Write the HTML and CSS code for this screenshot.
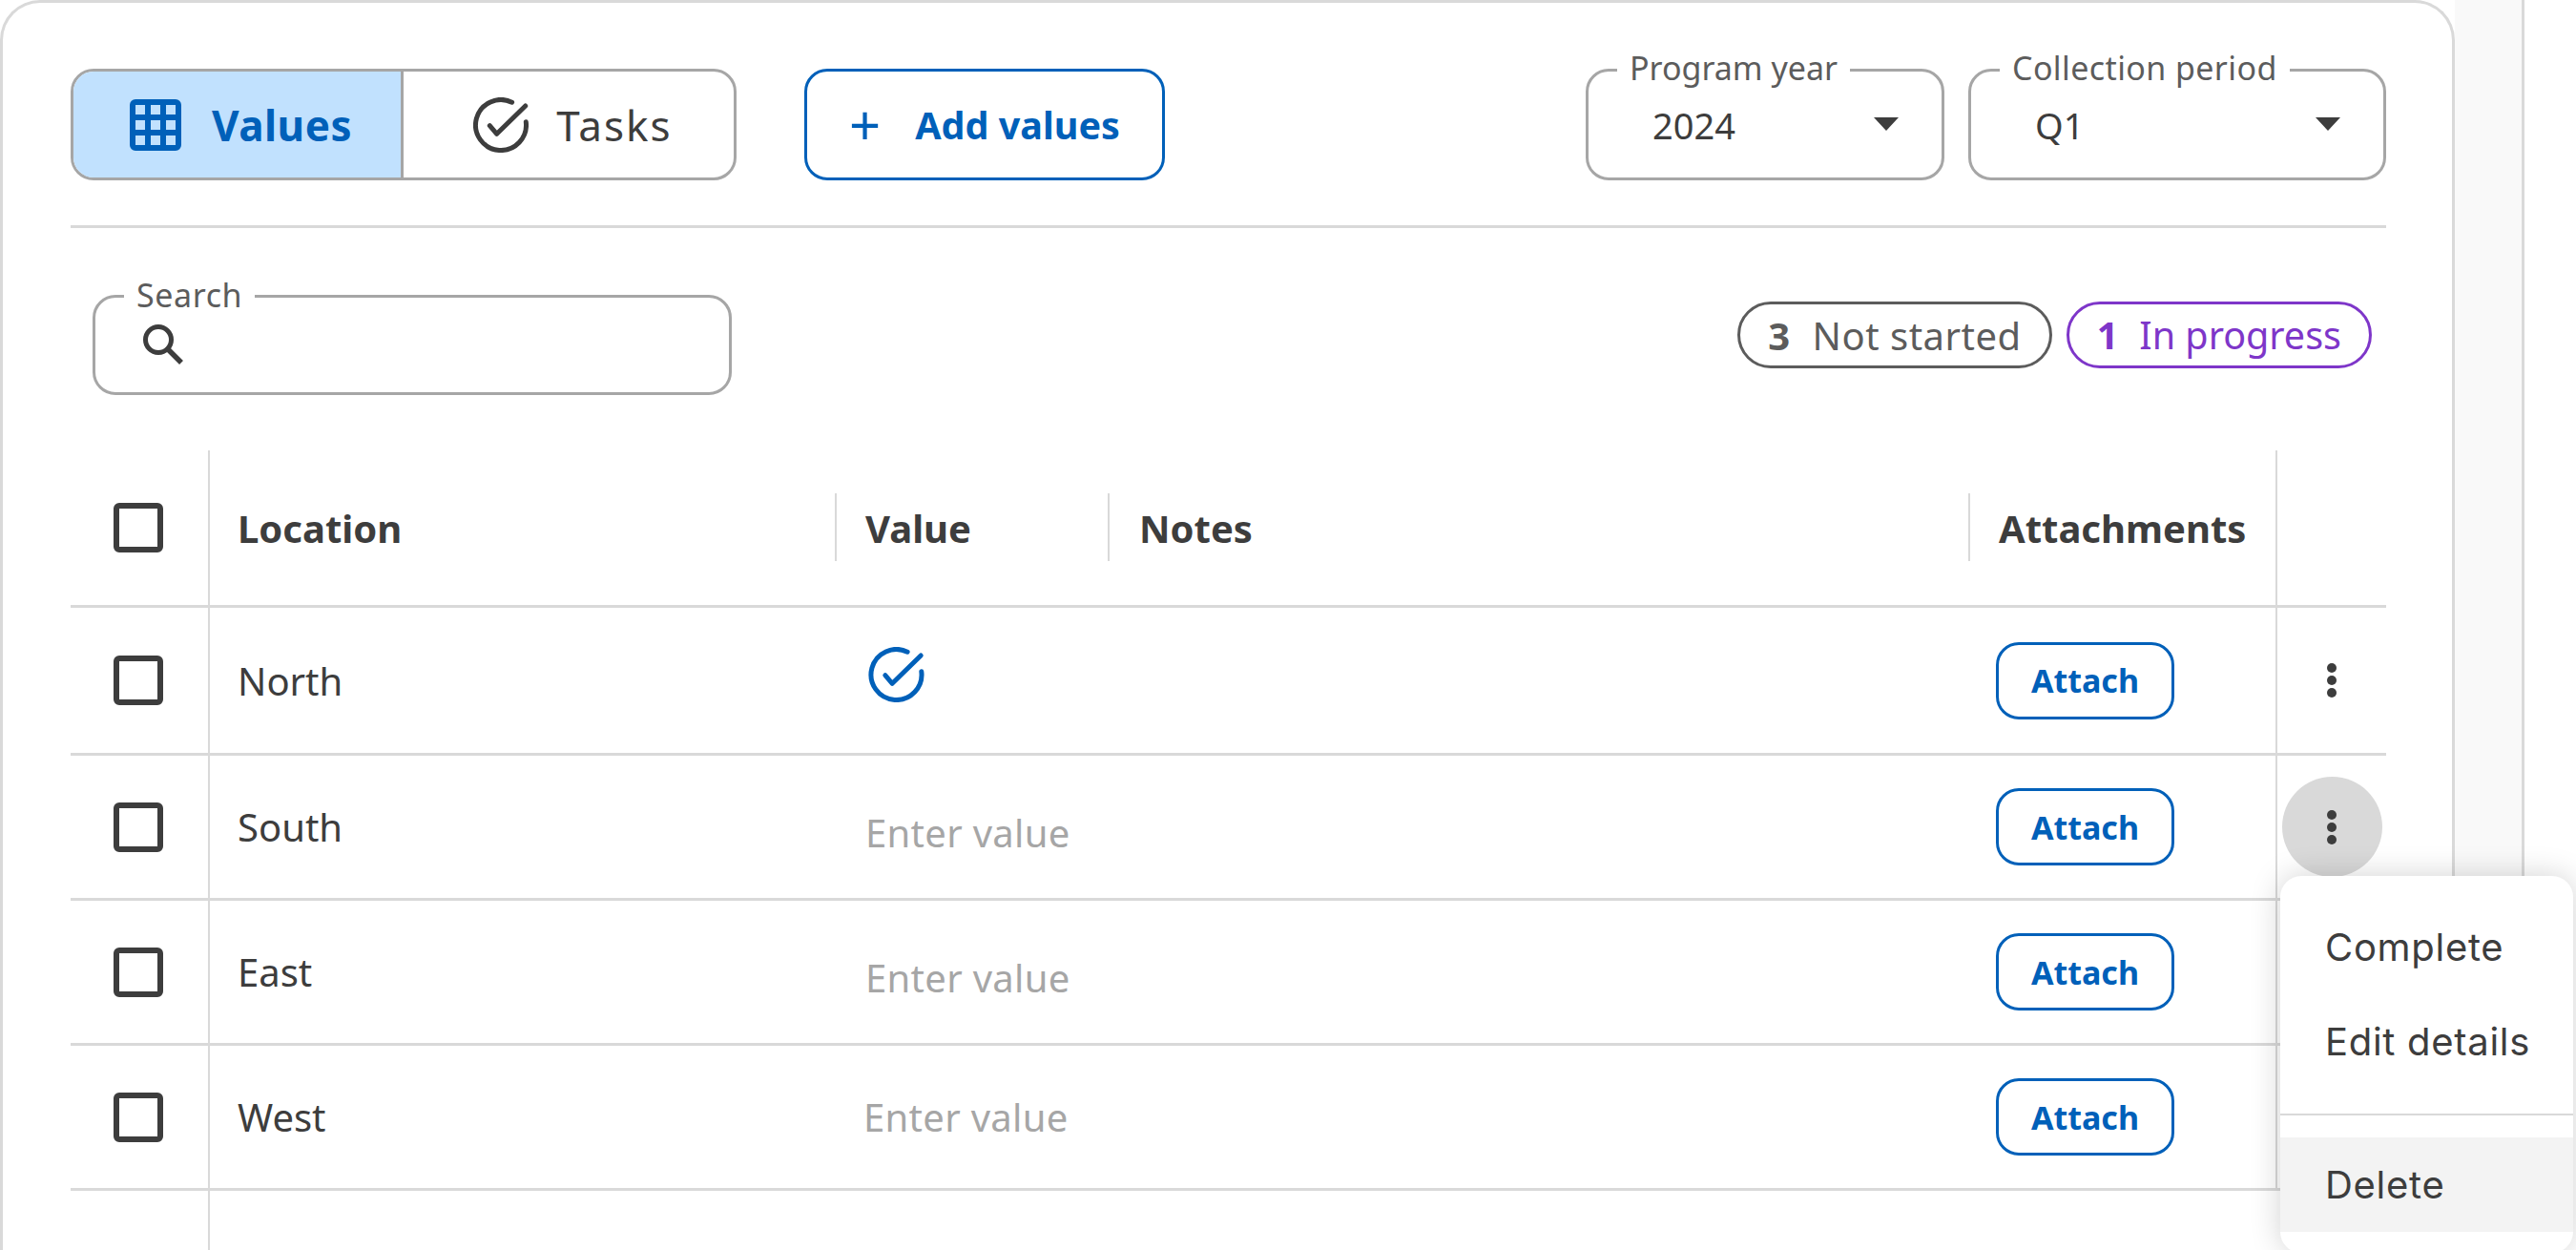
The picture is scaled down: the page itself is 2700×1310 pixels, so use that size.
FILE: index.html
```html
<!DOCTYPE html>
<html lang="en">
<head>
<meta charset="utf-8">
<title>Values</title>
<link rel="stylesheet" href="styles.css">
</head>
<body>
<main class="card">
  <div class="toolbar">
    <div class="segment">
      <button class="seg seg-on">
        <svg class="ico-grid" viewBox="0 0 54 54"><path fill-rule="evenodd" fill="#0060b9" d="M6 0h42a6 6 0 0 1 6 6v42a6 6 0 0 1-6 6H6a6 6 0 0 1-6-6V6a6 6 0 0 1 6-6zM6 6v10h10V6zM22 6v10h10V6zM38 6v10h10V6zM6 22v10h10V22zM22 22v10h10V22zM38 22v10h10V22zM6 38v10h10V38zM22 38v10h10V38zM38 38v10h10V38z"/></svg>
        <span>Values</span>
      </button>
      <button class="seg seg-off">
        <svg class="ico-check" viewBox="0 0 58 58"><path class="tick" d="M40.6 5.2A26.5 26.5 0 1 0 55.3 25.8"/><path class="tick" d="M17.3 29.7L24.7 38.3L54.7 9"/></svg>
        <span>Tasks</span>
      </button>
    </div>
    <button class="add"><span class="plus">+</span><span>Add values</span></button>
    <div class="selects">
      <div class="select sel-year"><span class="float">Program year</span><span>2024</span><i class="caret"></i></div>
      <div class="select sel-period"><span class="float">Collection period</span><span>Q1</span><i class="caret"></i></div>
    </div>
  </div>
  <hr class="rule">
  <div class="filters">
    <div class="search"><span class="float">Search</span>
      <svg class="ico-search" viewBox="0 0 43 43"><circle cx="16" cy="16" r="13.5" fill="none" stroke="#3d3d3d" stroke-width="5"/><path d="M26 26L40 40" stroke="#3d3d3d" stroke-width="5.5"/></svg>
    </div>
    <div class="pills">
      <span class="pill pill-gray"><b>3</b>Not started</span>
      <span class="pill pill-purple"><b>1</b>In progress</span>
    </div>
  </div>
  <div class="table">
    <div class="row head">
      <div class="cell c-check"><i class="box"></i></div>
      <div class="cell c-loc">Location</div>
      <div class="cell c-val"><span class="hd">Value</span></div>
      <div class="cell c-notes"><span class="hd">Notes</span></div>
      <div class="cell c-att"><span class="hd">Attachments</span></div>
      <div class="cell c-more"></div>
    </div>
    <div class="row">
      <div class="cell c-check"><i class="box"></i></div>
      <div class="cell c-loc">North</div>
      <div class="cell c-val"><svg class="ico-done" viewBox="0 0 58 58"><path class="tick" d="M40.6 5.2A26.5 26.5 0 1 0 55.3 25.8"/><path class="tick" d="M17.3 29.7L24.7 38.3L54.7 9"/></svg></div>
      <div class="cell c-notes"></div>
      <div class="cell c-att"><button class="attach">Attach</button></div>
      <div class="cell c-more"><span class="kebab"><i></i><i></i><i></i></span></div>
    </div>
    <div class="row">
      <div class="cell c-check"><i class="box"></i></div>
      <div class="cell c-loc">South</div>
      <div class="cell c-val"><span class="ph">Enter value</span></div>
      <div class="cell c-notes"></div>
      <div class="cell c-att"><button class="attach">Attach</button></div>
      <div class="cell c-more"><span class="kebab kebab-on"><i></i><i></i><i></i></span></div>
    </div>
    <div class="row">
      <div class="cell c-check"><i class="box"></i></div>
      <div class="cell c-loc">East</div>
      <div class="cell c-val"><span class="ph">Enter value</span></div>
      <div class="cell c-notes"></div>
      <div class="cell c-att"><button class="attach">Attach</button></div>
      <div class="cell c-more"><span class="kebab"><i></i><i></i><i></i></span></div>
    </div>
    <div class="row">
      <div class="cell c-check"><i class="box"></i></div>
      <div class="cell c-loc">West</div>
      <div class="cell c-val"><span class="ph ph-west">Enter value</span></div>
      <div class="cell c-notes"></div>
      <div class="cell c-att"><button class="attach">Attach</button></div>
      <div class="cell c-more"><span class="kebab"><i></i><i></i><i></i></span></div>
    </div>
    <div class="row tail">
      <div class="cell c-check"></div>
      <div class="cell c-loc"></div>
    </div>
  </div>
</main>
<aside class="side"></aside>
<div class="menu">
  <div class="item">Complete</div>
  <div class="item">Edit details</div>
  <div class="sep"></div>
  <div class="item item-on">Delete</div>
</div>
</body>
</html>
```
FILE: styles.css
```css
* { box-sizing: border-box; }
html, body { margin: 0; height: 1310px; overflow: hidden; }
body {
  display: flex;
  align-items: stretch;
  background: #fff;
  color: #3d3d3d;
  font-family: "Noto Sans", "Liberation Sans", sans-serif;
  font-size: 40px;
  position: relative;
}
button { font: inherit; background: none; border: 0; padding: 0; color: inherit; }
.card {
  width: 2573px;
  height: 1310px;
  flex: none;
  border: 3px solid #d9d9d9;
  border-bottom: 0;
  border-radius: 42px 42px 0 0;
  padding: 69px 69px 0 71px;
  background: #fff;
}
.side {
  width: 73px;
  flex: none;
  background: #f9f9f9;
  border-right: 3px solid #d9d9d9;
}
.tick { fill: none; stroke: currentColor; stroke-width: 5; stroke-linecap: round; stroke-linejoin: round; }
.toolbar { display: flex; height: 117px; align-items: stretch; }
.segment {
  display: flex;
  width: 698px;
  border: 3px solid #a6a6a6;
  border-radius: 24px;
  overflow: hidden;
}
.seg { display: flex; align-items: center; justify-content: center; flex: 1; }
.seg-off { gap: 29px; padding-left: 9px; font-size: 44px; letter-spacing: 2px; }
.seg-on {
  flex: none;
  width: 346px;
  gap: 32px;
  padding-left: 8px;
  background: #c1e1fe;
  color: #0060b9;
  font-weight: 700;
  font-size: 44px;
  letter-spacing: .5px;
  border-right: 3px solid #a6a6a6;
}
.ico-grid { width: 54px; height: 54px; flex: none; }
.ico-check { width: 58px; height: 58px; flex: none; }
.add {
  margin-left: 71px;
  width: 378px;
  display: flex;
  align-items: center;
  justify-content: center;
  gap: 36px;
  border: 3px solid #0060b9;
  border-radius: 24px;
  color: #0060b9;
  font-weight: 700;
  font-size: 39.5px;
}
.plus { font-weight: 400; font-size: 58px; line-height: 1; }
.selects { margin-left: auto; display: flex; gap: 25px; }
.select {
  position: relative;
  display: flex;
  align-items: center;
  padding-left: 67px;
  border: 3px solid #a6a6a6;
  border-radius: 24px;
  font-size: 38px;
}
.sel-year { width: 376px; }
.sel-period { width: 438px; }
.float {
  position: absolute;
  top: -22px;
  left: 30px;
  padding: 0 13px;
  background: #fff;
  font-size: 34px;
  line-height: 36px;
  color: #5c5c5c;
}
.sel-period .float { letter-spacing: .4px; }
.search .float { letter-spacing: .6px; }
.caret {
  position: absolute;
  right: 45px;
  top: 50%;
  margin-top: -8px;
  width: 0;
  height: 0;
  border-left: 13px solid transparent;
  border-right: 13px solid transparent;
  border-top: 14px solid #3d3d3d;
}
.rule { margin: 47px 0 0; border: 0; height: 3px; background: #d9d9d9; }
.filters {
  display: flex;
  align-items: flex-start;
  justify-content: space-between;
  height: 104px;
  margin-top: 70px;
  padding: 0 15px 0 23px;
}
.search {
  position: relative;
  width: 670px;
  height: 105px;
  border: 3px solid #a6a6a6;
  border-radius: 24px;
  display: flex;
  align-items: center;
  padding-left: 50px;
}
.search .float { top: -21px; }
.ico-search { width: 43px; height: 43px; }
.pills { display: flex; gap: 15px; margin-top: 7px; }
.pill {
  display: flex;
  align-items: center;
  height: 70px;
  padding: 0 29px;
  border: 3px solid #5c5c5c;
  border-radius: 35px;
  color: #5c5c5c;
  font-size: 40px;
  letter-spacing: .5px;
}
.pill b { margin-right: 23px; }
.pill-purple { border-color: #7e36c9; color: #7e36c9; font-size: 39.5px; letter-spacing: 0; }
.pill-purple b { margin-right: 22px; }
.table { margin-top: 59px; }
.row {
  display: grid;
  grid-template-columns: 144px 657px 286px 902px 322px 116px;
  height: 152px;
  border-bottom: 3px solid #d9d9d9;
}
.head { height: 165px; font-weight: 700; font-size: 40px; }
.row:nth-child(2) { height: 155px; }
.tail { height: 65px; border-bottom: 0; }
.cell { display: flex; align-items: center; }
.c-check { justify-content: center; }
.c-check .box { margin-left: -3px; }
.c-loc { border-left: 2px solid #d9d9d9; padding-left: 29px; }
.c-val { padding-left: 32px; }
.c-notes { padding-left: 33px; }
.c-att { padding-left: 31px; }
.c-more { border-left: 2px solid #d9d9d9; justify-content: center; }
.head .c-val, .head .c-notes, .head .c-att { position: relative; }
.head .c-att { padding-left: 32px; }
.head .c-val::before, .head .c-notes::before, .head .c-att::before {
  content: "";
  position: absolute;
  left: 0;
  top: 45px;
  height: 71px;
  width: 2px;
  background: #d9d9d9;
}
.box {
  display: block;
  width: 52px;
  height: 52px;
  border: 6px solid #3d3d3d;
  border-radius: 6px;
}
.ph { color: #a6a6a6; position: relative; top: 6px; letter-spacing: .3px; }
.ph-west { top: 0; left: -2px; }
.ico-done { width: 59px; height: 58px; color: #0060b9; margin: -12px 0 0 3px; }
.attach {
  width: 187px;
  height: 81px;
  margin-left: -2px;
  border: 3px solid #0060b9;
  border-radius: 24px;
  color: #0060b9;
  font-weight: 700;
  font-size: 34px;
}
.kebab {
  width: 105px;
  height: 105px;
  border-radius: 50%;
  display: flex;
  flex-direction: column;
  align-items: center;
  justify-content: center;
  gap: 3px;
}
.kebab-on { background: #d9d9d9; }
.kebab i { width: 10px; height: 10px; border-radius: 50%; background: #3d3d3d; }
.menu {
  position: absolute;
  left: 2390px;
  top: 918px;
  width: 307px;
  padding: 25px 0 22px;
  background: #fff;
  border-radius: 22px;
  box-shadow: 0 0 32px rgba(0, 0, 0, .18);
  font-family: "Inter", "Liberation Sans", sans-serif;
  font-size: 40px;
  letter-spacing: .7px;
}
.item { height: 99px; display: flex; align-items: center; padding-left: 47px; }
.item-on { background: #f3f3f3; }
.sep { height: 2px; margin: 26px 0 23px; background: #d9d9d9; }
```
